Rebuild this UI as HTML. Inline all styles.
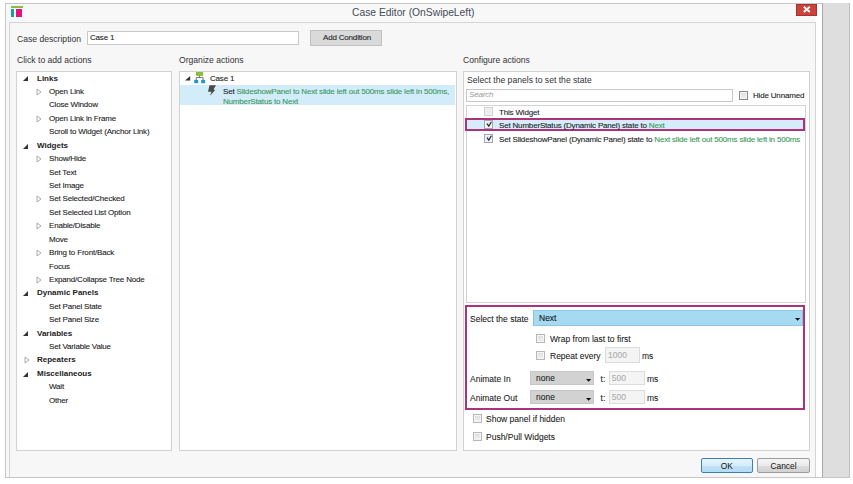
<!DOCTYPE html>
<html><head><meta charset="utf-8">
<style>
*{margin:0;padding:0;box-sizing:border-box}
html,body{width:853px;height:484px;overflow:hidden;background:#fff;font-family:"Liberation Sans",sans-serif;color:#222}
.a{position:absolute}
.t{position:absolute;white-space:nowrap;line-height:1}
.win{left:5px;top:3px;width:845px;height:475px;border:1px solid #c6c6c6;background:#f8f8f8}
.body{left:9px;top:22px;width:807px;height:455px;border:1px solid #d4d4d4;border-bottom:none;background:#f7f7f7}
.strip{left:822px;top:3px;width:28px;height:475px;background:#dedede;border-left:1px solid #a8a8a8;border-right:1px solid #c0c0c0;border-bottom:1px solid #c6c6c6}
.panel{background:#fff;border:1px solid #d2d2d2}
.lbl{font-size:8.6px;color:#333}
.li{font-size:8px;letter-spacing:-0.18px;color:#222;-webkit-text-stroke:0.1px}
.lm{font-size:8.5px;color:#222;-webkit-text-stroke:0.08px}
.lb{font-size:8px;font-weight:bold;color:#222}
.g{color:#38985a}
.cb{position:absolute;width:9px;height:9px;border:1px solid #b8b8b8;background:linear-gradient(#dcdcdc,#f2f2f2);box-shadow:inset 0 0 0 1px #f4f4f4}
.cbd{border-color:#8c8c8c}
.cbl{border-color:#d0d0d0;background:#ececec}
.cbc{border-color:#a4a4b4;background:linear-gradient(#dfe3ea,#f4f6fa)}
</style></head><body>
<div class="a win"></div>
<div class="a" style="left:816px;top:4px;width:6px;height:473px;background:#fff"></div>
<div class="a strip"></div>
<!-- icon -->
<div class="a" style="left:11px;top:5.6px;width:11.6px;height:2px;background:#84c03a"></div>
<div class="a" style="left:11px;top:9px;width:3.4px;height:8px;background:#1a9ab8"></div>
<div class="a" style="left:16.2px;top:9px;width:6.2px;height:8px;background:#e4127c"></div>
<div class="t" style="left:352px;top:8px;font-size:10.3px;color:#444c58">Case Editor (OnSwipeLeft)</div>
<!-- close -->
<div class="a" style="left:796px;top:4px;width:21px;height:12px;background:#c7433b;border:1px solid #a8322c"></div>
<svg class="a" style="left:803px;top:6px" width="8" height="8" viewBox="0 0 8 8"><path d="M0.8 0.8 L6.8 6 M6.8 0.8 L0.8 6" stroke="#fff" stroke-width="1.8"/></svg>

<div class="a body"></div>

<div class="t lbl" style="left:17px;top:35px">Case description</div>
<div class="a" style="left:87px;top:31px;width:212px;height:14px;background:#fff;border:1px solid #c8c8c8"></div>
<div class="t li" style="left:90px;top:34px">Case 1</div>
<div class="a" style="left:310px;top:30px;width:72px;height:16px;background:#dadada;border:1px solid #c0c0c0"></div>
<div class="t li" style="left:323px;top:34px">Add Condition</div>

<div class="t lbl" style="left:17px;top:56px">Click to add actions</div>
<div class="t lbl" style="left:179px;top:56px">Organize actions</div>
<div class="t lbl" style="left:463px;top:56px">Configure actions</div>

<!-- left panel -->
<div class="a panel" style="left:16px;top:71px;width:156px;height:380px"></div>
<div class="t lb" style="left:37px;top:74.6px">Links</div>
<svg class="a" style="left:22px;top:75.4px" width="7" height="7" viewBox="0 0 7 7"><path d="M1 6 L6 6 L6 1 Z" fill="#333"/></svg>
<div class="t li" style="left:49px;top:88.0px">Open Link</div>
<svg class="a" style="left:36px;top:87.6px" width="6" height="8" viewBox="0 0 6 8"><path d="M1 1 L5 4 L1 7 Z" fill="none" stroke="#aaa" stroke-width="1"/></svg>
<div class="t li" style="left:49px;top:101.4px">Close Window</div>
<div class="t li" style="left:49px;top:114.9px">Open Link in Frame</div>
<svg class="a" style="left:36px;top:114.5px" width="6" height="8" viewBox="0 0 6 8"><path d="M1 1 L5 4 L1 7 Z" fill="none" stroke="#aaa" stroke-width="1"/></svg>
<div class="t li" style="left:49px;top:128.3px">Scroll to Widget (Anchor Link)</div>
<div class="t lb" style="left:37px;top:141.7px">Widgets</div>
<svg class="a" style="left:22px;top:142.5px" width="7" height="7" viewBox="0 0 7 7"><path d="M1 6 L6 6 L6 1 Z" fill="#333"/></svg>
<div class="t li" style="left:49px;top:155.1px">Show/Hide</div>
<svg class="a" style="left:36px;top:154.7px" width="6" height="8" viewBox="0 0 6 8"><path d="M1 1 L5 4 L1 7 Z" fill="none" stroke="#aaa" stroke-width="1"/></svg>
<div class="t li" style="left:49px;top:168.5px">Set Text</div>
<div class="t li" style="left:49px;top:182.0px">Set Image</div>
<div class="t li" style="left:49px;top:195.4px">Set Selected/Checked</div>
<svg class="a" style="left:36px;top:195.0px" width="6" height="8" viewBox="0 0 6 8"><path d="M1 1 L5 4 L1 7 Z" fill="none" stroke="#aaa" stroke-width="1"/></svg>
<div class="t li" style="left:49px;top:208.8px">Set Selected List Option</div>
<div class="t li" style="left:49px;top:222.2px">Enable/Disable</div>
<svg class="a" style="left:36px;top:221.8px" width="6" height="8" viewBox="0 0 6 8"><path d="M1 1 L5 4 L1 7 Z" fill="none" stroke="#aaa" stroke-width="1"/></svg>
<div class="t li" style="left:49px;top:235.6px">Move</div>
<div class="t li" style="left:49px;top:249.1px">Bring to Front/Back</div>
<svg class="a" style="left:36px;top:248.7px" width="6" height="8" viewBox="0 0 6 8"><path d="M1 1 L5 4 L1 7 Z" fill="none" stroke="#aaa" stroke-width="1"/></svg>
<div class="t li" style="left:49px;top:262.5px">Focus</div>
<div class="t li" style="left:49px;top:275.9px">Expand/Collapse Tree Node</div>
<svg class="a" style="left:36px;top:275.5px" width="6" height="8" viewBox="0 0 6 8"><path d="M1 1 L5 4 L1 7 Z" fill="none" stroke="#aaa" stroke-width="1"/></svg>
<div class="t lb" style="left:37px;top:289.3px">Dynamic Panels</div>
<svg class="a" style="left:22px;top:290.1px" width="7" height="7" viewBox="0 0 7 7"><path d="M1 6 L6 6 L6 1 Z" fill="#333"/></svg>
<div class="t li" style="left:49px;top:302.7px">Set Panel State</div>
<div class="t li" style="left:49px;top:316.2px">Set Panel Size</div>
<div class="t lb" style="left:37px;top:329.6px">Variables</div>
<svg class="a" style="left:22px;top:330.4px" width="7" height="7" viewBox="0 0 7 7"><path d="M1 6 L6 6 L6 1 Z" fill="#333"/></svg>
<div class="t li" style="left:49px;top:343.0px">Set Variable Value</div>
<div class="t lb" style="left:37px;top:356.4px">Repeaters</div>
<svg class="a" style="left:24px;top:356.0px" width="6" height="8" viewBox="0 0 6 8"><path d="M1 1 L5 4 L1 7 Z" fill="none" stroke="#aaa" stroke-width="1"/></svg>
<div class="t lb" style="left:37px;top:369.8px">Miscellaneous</div>
<svg class="a" style="left:22px;top:370.6px" width="7" height="7" viewBox="0 0 7 7"><path d="M1 6 L6 6 L6 1 Z" fill="#333"/></svg>
<div class="t li" style="left:49px;top:383.3px">Wait</div>
<div class="t li" style="left:49px;top:396.7px">Other</div>
<!-- middle panel -->
<div class="a panel" style="left:179px;top:71px;width:278px;height:380px"></div>
<div class="a" style="left:180px;top:85px;width:275px;height:20px;background:#d3ecfa"></div>
<svg class="a" style="left:180px;top:68px" width="40" height="32" viewBox="0 0 40 32"><path d="M5 12.6 L10.2 7.9 L10.2 12.6 Z" fill="#333"/><rect x="15.9" y="4" width="7.2" height="3.9" fill="#86c03a"/><path d="M19.5 7.9 V9.6 M16.2 9.6 H23.1 M16.2 9.6 V12 M23.1 9.6 V12" stroke="#666" stroke-width="0.9" fill="none"/><rect x="14.2" y="11.9" width="4" height="3.3" fill="#1e96d2"/><rect x="21.2" y="11.9" width="3.9" height="3.3" fill="#1e96d2"/></svg>
<div class="t li" style="left:210px;top:75px">Case 1</div>
<svg class="a" style="left:180px;top:68px" width="40" height="32" viewBox="0 0 40 32"><path d="M29.5 17.2 L36 17.2 L33.6 21.3 L35 22.2 L30 27.8 L31.5 23.8 L28 23.8 Z" fill="#4a4a4a"/></svg>
<div class="t li" style="left:223px;top:88px">Set <span class="g">SlideshowPanel to Next slide left out 500ms slide left in 500ms,</span></div>
<div class="t li g" style="left:223px;top:97.5px">NumberStatus to Next</div>


<!-- right panel -->
<div class="a panel" style="left:463px;top:71px;width:347px;height:380px"></div>
<div class="t lbl" style="left:467px;top:76px">Select the panels to set the state</div>
<div class="a" style="left:466px;top:89px;width:267px;height:13px;background:#fff;border:1px solid #c8c8c8"></div>
<div class="t li" style="left:469px;top:91px;color:#999;font-style:italic;-webkit-text-stroke:0">Search</div>
<div class="cb cbd" style="left:739px;top:91px"></div>
<div class="t li" style="left:753px;top:92px">Hide Unnamed</div>
<div class="a" style="left:466px;top:105px;width:340px;height:198px;background:#fff;border:1px solid #d4d4d4"></div>

<div class="cb cbl" style="left:483.5px;top:107px"></div>
<div class="t li" style="left:499px;top:109px">This Widget</div>
<div class="a" style="left:465px;top:118px;width:340px;height:12.8px;background:#d6ecfa;border:2px solid #ab3379"></div>
<div class="cb cbc" style="left:483.5px;top:120px"><svg width="9" height="9" viewBox="0 0 9 9" style="position:absolute;left:-1px;top:-1px"><path d="M3 3.6 L4.8 6.2 L7.4 1.8" stroke="#222" stroke-width="1.15" fill="none"/></svg></div>
<div class="t li" style="left:499px;top:122px">Set NumberStatus (Dynamic Panel) state to <span class="g">Next</span></div>
<div class="cb cbc" style="left:483.5px;top:133.5px"><svg width="9" height="9" viewBox="0 0 9 9" style="position:absolute;left:-1px;top:-1px"><path d="M3 3.6 L4.8 6.2 L7.4 1.8" stroke="#222" stroke-width="1.15" fill="none"/></svg></div>
<div class="t li" style="left:499px;top:136px">Set SlideshowPanel (Dynamic Panel) state to <span class="g">Next slide left out 500ms slide left in 500ms</span></div>

<div class="a" style="left:465px;top:305px;width:340px;height:105px;border:2px solid #ab3379"></div>
<div class="t lm" style="left:470px;top:315px">Select the state</div>
<div class="a" style="left:533px;top:310px;width:269.5px;height:16px;background:#a6d9f2;border:1px solid #8cc6e4"></div>
<div class="t lm" style="left:539px;top:313.5px;color:#111">Next</div>
<svg class="a" style="left:795px;top:317.5px" width="6" height="3" viewBox="0 0 6 3"><path d="M0 0 H5.2 L2.6 2.8 Z" fill="#111"/></svg>
<div class="cb" style="left:536px;top:334.3px"></div>
<div class="t lm" style="left:550px;top:334.5px">Wrap from last to first</div>
<div class="cb" style="left:536px;top:351.2px"></div>
<div class="t lm" style="left:550px;top:351.5px">Repeat every</div>
<div class="a" style="left:604.5px;top:347px;width:35.5px;height:16px;background:#f4f4f4;border:1px solid #dcdcdc"></div>
<div class="t lm" style="left:608px;top:350.5px;color:#aaa">1000</div>
<div class="t lm" style="left:642px;top:351.5px">ms</div>
<div class="t lm" style="left:470px;top:375.3px">Animate In</div>
<div class="a" style="left:530px;top:371.3px;width:64px;height:14.2px;background:#d2d2d2;border:1px solid #c6c6c6"></div>
<div class="t lm" style="left:536px;top:374.3px;color:#222">none</div>
<svg class="a" style="left:586.4px;top:378.7px" width="6" height="3" viewBox="0 0 6 3"><path d="M0 0 H5.2 L2.6 2.8 Z" fill="#111"/></svg>
<div class="t lm" style="left:600.6px;top:375.3px">t:</div>
<div class="a" style="left:609.2px;top:371.3px;width:35.5px;height:14.2px;background:#f4f4f4;border:1px solid #dcdcdc"></div>
<div class="t lm" style="left:611.7px;top:374.3px;color:#aaa">500</div>
<div class="t lm" style="left:647px;top:375.3px">ms</div>
<div class="t lm" style="left:470px;top:394.3px">Animate Out</div>
<div class="a" style="left:530px;top:390.3px;width:64px;height:14.2px;background:#d2d2d2;border:1px solid #c6c6c6"></div>
<div class="t lm" style="left:536px;top:393.3px;color:#222">none</div>
<svg class="a" style="left:586.4px;top:397.7px" width="6" height="3" viewBox="0 0 6 3"><path d="M0 0 H5.2 L2.6 2.8 Z" fill="#111"/></svg>
<div class="t lm" style="left:600.6px;top:394.3px">t:</div>
<div class="a" style="left:609.2px;top:390.3px;width:35.5px;height:14.2px;background:#f4f4f4;border:1px solid #dcdcdc"></div>
<div class="t lm" style="left:611.7px;top:393.3px;color:#aaa">500</div>
<div class="t lm" style="left:647px;top:394.3px">ms</div>

<div class="cb" style="left:472.5px;top:414.2px"></div>
<div class="t lm" style="left:486px;top:414.5px">Show panel if hidden</div>
<div class="cb" style="left:472.5px;top:432.3px"></div>
<div class="t lm" style="left:486px;top:432.5px">Push/Pull Widgets</div>

<!-- buttons -->
<div class="a" style="left:700.5px;top:458px;width:52.5px;height:15px;border:1px solid #3c7fb1;border-radius:2px;background:linear-gradient(#e6f4fc 0%,#d6edfa 50%,#bfe2f6 51%,#b4dcf3 100%)"></div>
<div class="t" style="left:700.5px;width:52.5px;text-align:center;top:461.5px;font-size:8.4px;color:#111">OK</div>
<div class="a" style="left:757px;top:458px;width:53px;height:15px;border:1px solid #9d9d9d;border-radius:2px;background:linear-gradient(#f4f4f4 0%,#ebebeb 50%,#dddddd 51%,#d2d2d2 100%)"></div>
<div class="t" style="left:757px;width:53px;text-align:center;top:461.5px;font-size:8.4px;color:#111">Cancel</div>
</body></html>
